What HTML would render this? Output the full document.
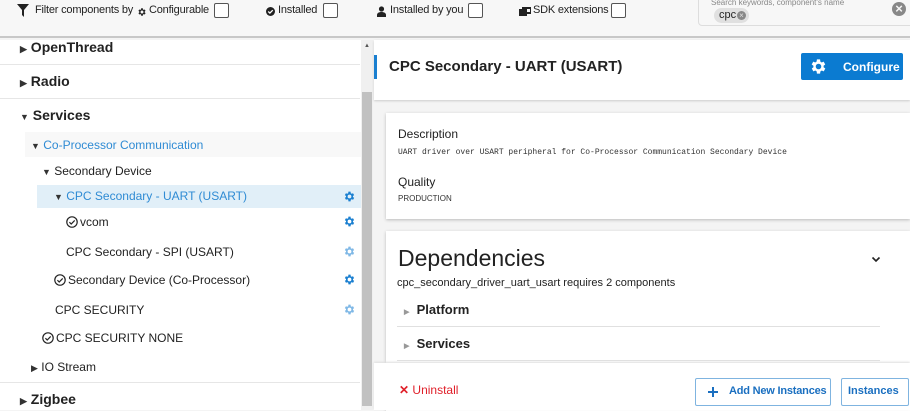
<!DOCTYPE html>
<html><head><meta charset="utf-8"><style>
*{box-sizing:border-box;margin:0;padding:0}
body{width:910px;height:410px;overflow:hidden;background:#f4f4f4;font-family:"Liberation Sans",Arial,sans-serif;color:#222;position:relative}
.a{position:absolute;white-space:nowrap}
.tb{font-size:11px;top:4px;color:#222;letter-spacing:-0.2px}
.cb{position:absolute;width:15px;height:15px;border:1px solid #555;border-radius:2px;background:#fff}
.tri{font-size:9px;color:#333}
.g{position:absolute;left:343px;width:13px;height:13px}
.sep{position:absolute;left:0;width:360px;height:1px;background:#e6e6e6}
.ck{display:inline-block;vertical-align:-2px;width:12px;height:12px;margin-right:2px}
</style></head><body>
<svg width="0" height="0" style="position:absolute"><defs>
<path id="gear" d="M19.4 13a7.5 7.5 0 000-2l2.1-1.6-2-3.5-2.5 1a7 7 0 00-1.7-1L15 3h-4l-.4 2.9a7 7 0 00-1.7 1l-2.5-1-2 3.5L6.6 11a7.5 7.5 0 000 2l-2.1 1.6 2 3.5 2.5-1a7 7 0 001.7 1L11 21h4l.4-2.9a7 7 0 001.7-1l2.5 1 2-3.5zM13 15.5a3.5 3.5 0 110-7 3.5 3.5 0 010 7z" transform="translate(-1 0)"/>
<g id="chk"><circle cx="6" cy="6" r="5.2" fill="none" stroke="#222" stroke-width="1.2"/><path d="M3.4 6.2l1.8 1.8 3.5-3.6" fill="none" stroke="#222" stroke-width="1.2"/></g>
</defs></svg>
<!-- top bar -->
<div class="a" style="left:0;top:0;width:910px;height:38px;background:#f7f7f7;border-bottom:2px solid #c8c8c8"></div>
<svg class="a" style="left:17px;top:4px" width="12" height="13" viewBox="0 0 12 13"><path d="M0 0H12L7 6V13L5 11V6Z" fill="#222"/></svg>
<div class="a tb" style="left:35px">Filter components by</div>
<svg class="a" style="left:137px;top:7px" width="10" height="10" viewBox="0 0 24 24"><use href="#gear" fill="#222"/></svg>
<div class="a tb" style="left:149px">Configurable</div>
<div class="cb" style="left:214px;top:3px"></div>
<svg class="a" style="left:266px;top:7px" width="9" height="9" viewBox="0 0 10 10"><circle cx="5" cy="5" r="5" fill="#222"/><path d="M2.5 5l1.8 1.8L7.5 3.5" stroke="#fff" stroke-width="1.4" fill="none"/></svg>
<div class="a tb" style="left:278px">Installed</div>
<div class="cb" style="left:323px;top:3px"></div>
<svg class="a" style="left:377px;top:6px" width="9" height="11" viewBox="0 0 9 11"><circle cx="4.5" cy="3" r="2.6" fill="#222"/><path d="M0 11V9c0-2 2-3 4.5-3S9 7 9 9v2z" fill="#222"/></svg>
<div class="a tb" style="left:390px">Installed by you</div>
<div class="cb" style="left:468px;top:3px"></div>
<svg class="a" style="left:519px;top:6px" width="12" height="10" viewBox="0 0 12 10"><rect x="0" y="3" width="8" height="7" fill="#222"/><rect x="3" y="1" width="9" height="7" fill="#222"/><rect x="8" y="3" width="3" height="3" fill="#f7f7f7"/></svg>
<div class="a tb" style="left:533px">SDK extensions</div>
<div class="cb" style="left:611px;top:3px"></div>
<div class="a" style="left:698px;top:-4px;width:216px;height:30px;border:1px solid #ddd;border-radius:4px;background:#f7f7f7"></div>
<div class="a" style="left:711px;top:-2px;font-size:8px;color:#888">Search keywords, component's name</div>
<div class="a" style="left:714px;top:8px;width:35px;height:15px;border-radius:8px;background:#e0e0e0;font-size:11px;padding-left:5px;line-height:15px">cpc</div>
<div class="a" style="left:737px;top:11px;width:9px;height:9px;border-radius:50%;background:#888;color:#e0e0e0;font-size:8px;line-height:9px;text-align:center">×</div>
<div class="a" style="left:892px;top:2px;width:14px;height:14px;border-radius:50%;background:#888;color:#f7f7f7;font-size:13px;line-height:14px;text-align:center;font-weight:bold">×</div>

<!-- left panel -->
<div class="a" style="left:0;top:40px;width:361px;height:370px;background:#fff"></div>
<div class="sep" style="top:64px"></div><div class="sep" style="top:98px"></div><div class="sep" style="top:382px"></div>
<div class="a" style="left:25px;top:132px;width:336px;height:25px;background:#f8f8f8"></div>
<div class="a" style="left:37px;top:185px;width:324px;height:23px;background:#e1eff8"></div>
<div class="a" style="left:20px;top:39px;font-size:14px;font-weight:bold"><span class="tri">▶</span> OpenThread</div>
<div class="a" style="left:20px;top:73px;font-size:14px;font-weight:bold"><span class="tri">▶</span> Radio</div>
<div class="a" style="left:20px;top:107px;font-size:14px;font-weight:bold"><span class="tri">▼</span> Services</div>
<div class="a" style="left:31px;top:138px;font-size:12px;color:#2f8bd4"><span class="tri" style="color:#333">▼</span> Co-Processor Communication</div>
<div class="a" style="left:42px;top:164px;font-size:12px"><span class="tri">▼</span> Secondary Device</div>
<div class="a" style="left:54px;top:189px;font-size:12px;color:#2f8bd4"><span class="tri" style="color:#333">▼</span> CPC Secondary - UART (USART)</div>
<div class="a" style="left:66px;top:215px;font-size:12px"><svg class="ck" viewBox="0 0 12 12"><use href="#chk"/></svg>vcom</div>
<div class="a" style="left:66px;top:245px;font-size:12px">CPC Secondary - SPI (USART)</div>
<div class="a" style="left:54px;top:273px;font-size:12px"><svg class="ck" viewBox="0 0 12 12"><use href="#chk"/></svg>Secondary Device (Co-Processor)</div>
<div class="a" style="left:55px;top:303px;font-size:12px">CPC SECURITY</div>
<div class="a" style="left:42px;top:331px;font-size:12px"><svg class="ck" viewBox="0 0 12 12"><use href="#chk"/></svg>CPC SECURITY NONE</div>
<div class="a" style="left:31px;top:360px;font-size:12px"><span class="tri">▶</span> IO Stream</div>
<div class="a" style="left:20px;top:391px;font-size:14px;font-weight:bold"><span class="tri">▶</span> Zigbee</div>
<svg class="g" style="top:190px" viewBox="0 0 24 24"><use href="#gear" fill="#1a7fd0"/></svg>
<svg class="g" style="top:215px" viewBox="0 0 24 24"><use href="#gear" fill="#1a7fd0"/></svg>
<svg class="g" style="top:245px" viewBox="0 0 24 24"><use href="#gear" fill="#7fb8e6"/></svg>
<svg class="g" style="top:273px" viewBox="0 0 24 24"><use href="#gear" fill="#1a7fd0"/></svg>
<svg class="g" style="top:303px" viewBox="0 0 24 24"><use href="#gear" fill="#7fb8e6"/></svg>
<!-- scrollbar -->
<div class="a" style="left:361px;top:40px;width:12px;height:370px;background:#f0f0f0"></div>
<div class="a" style="left:362px;top:92px;width:10px;height:314px;background:#c1c1c1"></div>
<div class="a" style="left:364px;top:43px;font-size:6px;color:#555">▲</div>

<!-- right -->
<div class="a" style="left:374px;top:40px;width:536px;height:60px;background:#fff;box-shadow:0 1px 2px #ccc"></div>
<div class="a" style="left:374px;top:55px;width:3px;height:24px;background:#1a7fd0"></div>
<div class="a" style="left:389px;top:58px;font-size:15px;font-weight:bold">CPC Secondary - UART (USART)</div>
<div class="a" style="left:801px;top:53px;width:102px;height:27px;background:#0b7bd1;border-radius:2px"></div>
<svg class="a" style="left:809px;top:57px" width="19" height="19" viewBox="0 0 24 24"><use href="#gear" fill="#fff"/></svg>
<div class="a" style="left:843px;top:60px;font-size:12px;font-weight:bold;color:#fff">Configure</div>

<div class="a" style="left:386px;top:113px;width:524px;height:106px;background:#fff;box-shadow:0 1px 3px #bbb"></div>
<div class="a" style="left:398px;top:127px;font-size:12px">Description</div>
<div class="a" style="left:398px;top:148px;font-size:8px;font-family:'Liberation Mono',monospace;color:#333">UART driver over USART peripheral for Co-Processor Communication Secondary Device</div>
<div class="a" style="left:398px;top:175px;font-size:12px">Quality</div>
<div class="a" style="left:398px;top:194px;font-size:8px;color:#333">PRODUCTION</div>

<div class="a" style="left:386px;top:231px;width:524px;height:180px;background:#fff;box-shadow:0 1px 3px #bbb"></div>
<div class="a" style="left:398px;top:245px;font-size:23px;color:#222">Dependencies</div>
<svg class="a" style="left:871px;top:256px" width="10" height="7" viewBox="0 0 10 7"><path d="M1.5 1.5L5 5l3.5-3.5" fill="none" stroke="#222" stroke-width="1.6"/></svg>
<div class="a" style="left:397px;top:277px;font-size:11px">cpc_secondary_driver_uart_usart requires 2 components</div>
<div class="a" style="left:404px;top:302px;font-size:13px;font-weight:bold"><span style="font-size:7px;color:#999">▶</span>&nbsp; Platform</div>
<div class="a" style="left:397px;top:326px;width:483px;height:1px;background:#e0e0e0"></div>
<div class="a" style="left:404px;top:336px;font-size:13px;font-weight:bold"><span style="font-size:7px;color:#999">▶</span>&nbsp; Services</div>
<div class="a" style="left:397px;top:360px;width:483px;height:1px;background:#e0e0e0"></div>

<div class="a" style="left:374px;top:363px;width:536px;height:47px;background:#fff;box-shadow:0 -1px 2px #ddd"></div>
<div class="a" style="left:399px;top:383px;font-size:12px;color:#e0202a"><b>✕</b> Uninstall</div>
<div class="a" style="left:695px;top:378px;width:136px;height:28px;border:1px solid #7fb4e0;border-radius:2px"></div>
<svg class="a" style="left:708px;top:387px" width="10" height="10" viewBox="0 0 10 10"><path d="M5 0V10M0 5H10" stroke="#1a6fc0" stroke-width="2"/></svg>
<div class="a" style="left:729px;top:385px;font-size:11px;color:#1a6fc0;font-weight:bold;letter-spacing:-0.2px">Add New Instances</div>
<div class="a" style="left:841px;top:378px;width:68px;height:28px;border:1px solid #7fb4e0;border-radius:2px"></div>
<div class="a" style="left:848px;top:385px;font-size:11px;color:#1a6fc0;font-weight:bold">Instances</div>
</body></html>
